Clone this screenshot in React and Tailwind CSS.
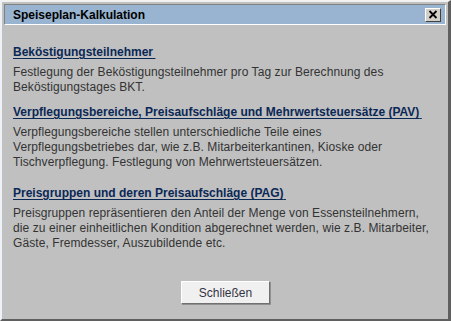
export default function App() {
  const sections = [
    {
      title: "Beköstigungsteilnehmer",
      lines: [
        "Festlegung der Beköstigungsteilnehmer pro Tag zur Berechnung des",
        "Beköstigungstages BKT.",
      ],
      mt: "mt-[19px]",
    },
    {
      title: "Verpflegungsbereiche, Preisaufschläge und Mehrwertsteuersätze (PAV)",
      lines: [
        "Verpflegungsbereiche stellen unterschiedliche Teile eines",
        "Verpflegungsbetriebes dar, wie z.B. Mitarbeiterkantinen, Kioske oder",
        "Tischverpflegung. Festlegung von Mehrwertsteuersätzen.",
      ],
      mt: "mt-[9px]",
    },
    {
      title: "Preisgruppen und deren Preisaufschläge (PAG)",
      lines: [
        "Preisgruppen repräsentieren den Anteil der Menge von Essensteilnehmern,",
        "die zu einer einheitlichen Kondition abgerechnet werden, wie z.B. Mitarbeiter,",
        "Gäste, Fremdesser, Auszubildende etc.",
      ],
      mt: "mt-[15px]",
    },
  ]

  return (
    <div className="w-[451px] h-[321px] bg-[#c0c0c0] border-t-2 border-l-2 border-t-[#f2f2f2] border-l-[#eef2f6] border-r-[3px] border-b-2 border-r-[#5f5f5f] border-b-[#5f5f5f] flex flex-col font-['Liberation_Sans',Arial,sans-serif]">
      {/* Title bar */}
      <div className="mx-[2px] mt-[2px] h-[21px] bg-[#98b4d0] border border-t-[#808080] border-l-[#808080] border-b-white border-r-white flex items-center justify-between pl-[8px] pr-[4px]">
        <span className="text-[12px] font-bold text-black leading-none">Speiseplan-Kalkulation</span>
        <button className="w-[16px] h-[14px] bg-[#d4d0c8] border border-t-white border-l-white border-b-[#404040] border-r-[#404040] flex items-center justify-center">
          <svg width="10" height="9" viewBox="0 0 10 9">
            <path d="M1.5 1 L8.5 8 M8.5 1 L1.5 8" stroke="#000" strokeWidth="1.8" fill="none" />
          </svg>
        </button>
      </div>

      {/* Content */}
      <div className="flex-1 flex flex-col pl-[11px]">
        {sections.map((s) => (
          <div key={s.title} className={s.mt}>
            <div className="text-[12px] leading-[16px] font-bold text-[#0a2856] underline underline-offset-[2px]">
              {s.title}{"\u2009"}
            </div>
            <div className="mt-[5px] text-[12px] leading-[15px] text-[#333333] tracking-[0.08px]">
              {s.lines.map((l) => (
                <div key={l}>{l}</div>
              ))}
            </div>
          </div>
        ))}
      </div>

      <div className="flex justify-center pb-[15px] pl-[1px]">
        <button className="w-[89px] h-[23px] bg-[#f0f0f0] border border-t-white border-l-white border-r-[#707070] border-b-[#707070] shadow-[1px_1px_0_#909090] text-[12px] text-[#333344]">
          Schließen
        </button>
      </div>
    </div>
  )
}
